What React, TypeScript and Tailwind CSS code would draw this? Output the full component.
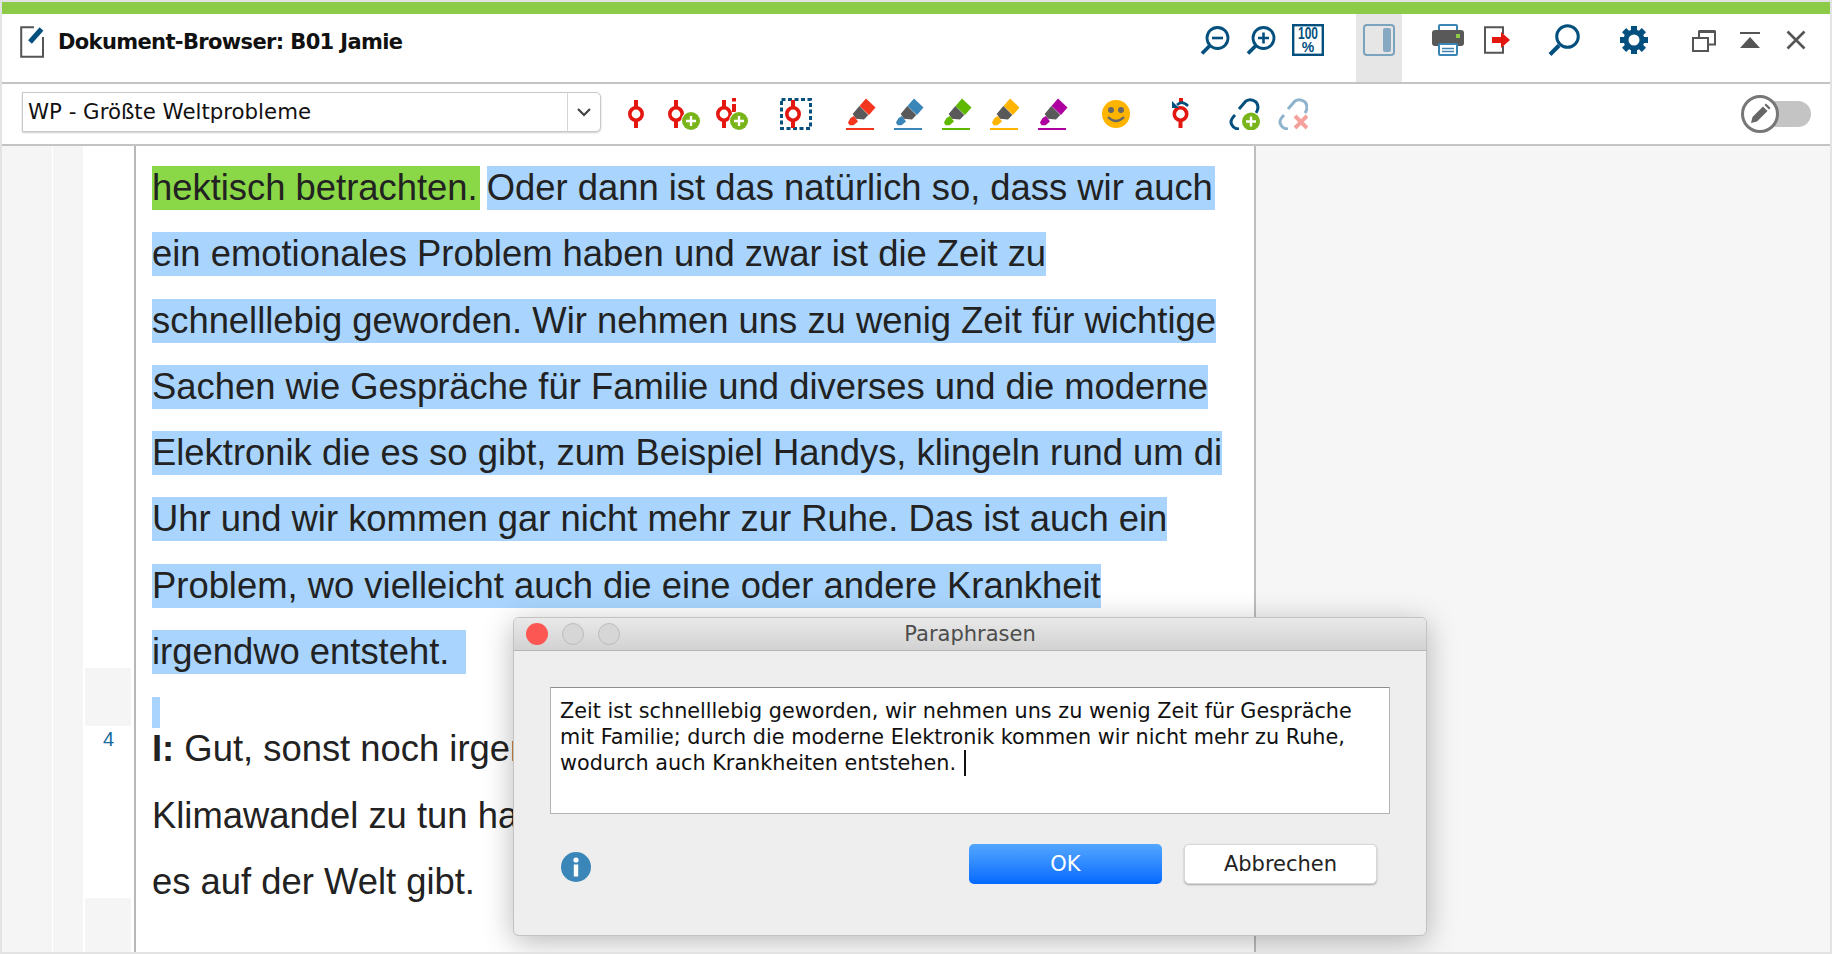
const BLUE = "#03507f";
const RED = "#e3170f";

function Marker({ cx = 12 }: { cx?: number }) {
  return (
    <>
      <rect x={cx - 2} y="2" width="4" height="28" fill={RED} />
      <circle cx={cx} cy="16" r="6.2" fill="#fff" stroke={RED} strokeWidth="3.6" />
    </>
  );
}

function PlusBadge({ cx, cy }: { cx: number; cy: number }) {
  return (
    <>
      <circle cx={cx} cy={cy} r="10" fill="#fff" stroke="none" />
      <circle cx={cx} cy={cy} r="9" fill="#78b41a" stroke="none" />
      <path d={`M${cx - 5} ${cy}H${cx + 5}M${cx} ${cy - 5}V${cy + 5}`} stroke="#fff" strokeWidth="2.4" />
    </>
  );
}

function Highlighter({ color }: { color: string }) {
  return (
    <svg viewBox="0 0 30 32" className="h-8 w-[30px] shrink-0">
      <path d="M20 .5 29.5 9.5 23 17 13.5 8Z" fill={color} />
      <path d="M13.3 8 22.3 17 18 21.5 10 20.7 6.7 16Z" fill="#595959" />
      <path d="M4.5 20 8 18 12 23.5 7.5 27.2H3.5L2 24.5Z" fill={color} />
      <rect x="0" y="30" width="28" height="2" fill={color} />
    </svg>
  );
}

function ZoomIcon({ plus }: { plus?: boolean }) {
  return (
    <svg viewBox="0 0 30 30" className="h-[30px] w-[30px] shrink-0" fill="none" stroke={BLUE}>
      <circle cx="17.5" cy="12" r="10.5" strokeWidth="2.8" />
      <path d="M9.5 20 2 27.5" strokeWidth="3.8" />
      <path d={plus ? "M12 12H23M17.5 6.5V17.5" : "M12 12H23"} strokeWidth="2.6" />
    </svg>
  );
}

function Gear() {
  return (
    <svg viewBox="0 0 28 28" className="h-7 w-7 shrink-0">
      {[0, 45, 90, 135, 180, 225, 270, 315].map((a) => (
        <rect key={a} x="11" y="0" width="6" height="6" fill={BLUE} transform={`rotate(${a} 14 14)`} />
      ))}
      <circle cx="14" cy="14" r="8" fill="#fff" stroke={BLUE} strokeWidth="5" />
    </svg>
  );
}

function TitleBar() {
  return (
    <div className="flex h-[68px] shrink-0 items-start bg-white">
      <svg viewBox="0 0 26 32" className="mt-3 ml-[18px] h-8 w-[26px] shrink-0" fill="none">
        <path d="M14 1.2H1.2V30.8H23V11" stroke="#555" strokeWidth="2" />
        <path d="M10 16 21.5 3" stroke={BLUE} strokeWidth="5" />
      </svg>
      <div className="mt-[12px] ml-[12px] text-[21px] leading-[32px] font-bold tracking-[-0.63px] text-[#111] [font-family:'DejaVu_Sans',sans-serif]">
        Dokument-Browser: B01 Jamie
      </div>

      <div className="mt-3 ml-auto flex items-center">
        <ZoomIcon />
        <div className="ml-4">
          <ZoomIcon plus />
        </div>
      </div>
      <svg viewBox="0 0 32 32" className="mt-[10px] ml-4 h-8 w-8 shrink-0">
        <rect x="1.2" y="1.2" width="29.6" height="29.6" fill="#fff" stroke={BLUE} strokeWidth="2.4" />
        <text x="16" y="15" textAnchor="middle" fontSize="16" fontWeight="700" fill={BLUE} textLength="20" lengthAdjust="spacingAndGlyphs" fontFamily="Liberation Sans, sans-serif">
          100
        </text>
        <text x="16" y="28" textAnchor="middle" fontSize="14" fontWeight="700" fill={BLUE} fontFamily="Liberation Sans, sans-serif">
          %
        </text>
      </svg>
      <div className="ml-8 flex h-[68px] w-[46px] shrink-0 items-start justify-center bg-[#e6e6e6] pt-[10px]">
        <svg viewBox="0 0 32 32" className="h-8 w-8">
          <rect x="1" y="1" width="30" height="30" rx="3" fill="none" stroke="#7ba3be" strokeWidth="2" />
          <rect x="20" y="4" width="8" height="24" rx="2" fill="#86a8c0" />
        </svg>
      </div>
      <svg viewBox="0 0 32 32" className="mt-[10px] ml-[30px] h-8 w-8 shrink-0">
        <path d="M7 6V2a1 1 0 0 1 1-1H24a1 1 0 0 1 1 1V6" fill="#fff" stroke="#3a85b5" strokeWidth="2" />
        <rect x="0" y="6" width="32" height="16" rx="3" fill="#595959" />
        <rect x="24" y="10" width="4" height="4" fill="#8bcb47" />
        <rect x="7" y="20" width="18" height="11" rx="1" fill="#fff" stroke="#3a85b5" strokeWidth="2" />
        <path d="M10 24.5H22M10 27.5H22" stroke="#3a85b5" strokeWidth="1.6" />
      </svg>
      <svg viewBox="0 0 26 28" className="mt-[12px] ml-5 h-7 w-[26px] shrink-0">
        <path d="M19 8V1.2H1V26.8H19V20" fill="none" stroke="#555" strokeWidth="2" />
        <path d="M8 11H17V6L26 14 17 22V17H8Z" fill={RED} />
      </svg>
      <svg viewBox="0 0 32 32" className="mt-[10px] ml-[38px] h-8 w-8 shrink-0" fill="none" stroke={BLUE}>
        <circle cx="19.5" cy="12.5" r="10.8" strokeWidth="3" />
        <path d="M11 21.5 2 30.5" strokeWidth="4" />
      </svg>
      <div className="mt-3 ml-10">
        <Gear />
      </div>
      <svg viewBox="0 0 24 22" className="mt-4 ml-[44px] h-[22px] w-6 shrink-0">
        <path d="M7 8V1.5H23V14.5H16" fill="none" stroke="#555" strokeWidth="2" />
        <path d="M7 1.5H23" stroke="#555" strokeWidth="3" />
        <rect x="1" y="8" width="15" height="13" fill="none" stroke="#555" strokeWidth="2" />
      </svg>
      <svg viewBox="0 0 20 16" className="mt-[18px] ml-6 h-4 w-5 shrink-0">
        <rect width="20" height="2" fill="#555" />
        <path d="M10 5 20 16H0Z" fill="#555" />
      </svg>
      <svg viewBox="0 0 20 20" className="mt-4 mr-[24px] ml-[26px] h-5 w-5 shrink-0">
        <path d="M1.5 1.5 18.5 18.5M18.5 1.5 1.5 18.5" stroke="#555" strokeWidth="2.6" />
      </svg>
    </div>
  );
}

function Toolbar() {
  return (
    <div className="flex h-[60px] shrink-0 items-center bg-white">
      <div className="mt-2 ml-5 flex h-10 w-[579px] shrink-0 self-start rounded-r-[5px] border border-[#c8c8c8] bg-white shadow-[0_1px_2px_rgba(0,0,0,0.2)]">
        <div className="flex-1 pl-[5px] text-[21.3px] leading-[38px] text-[#111] [font-family:'DejaVu_Sans',sans-serif]">
          WP - Größte Weltprobleme
        </div>
        <div className="flex w-[33px] items-center justify-center border-l border-[#d4d4d4]">
          <svg viewBox="0 0 16 10" className="h-[10px] w-4" fill="none">
            <path d="M2 2 8 8 14 2" stroke="#444" strokeWidth="2.2" />
          </svg>
        </div>
      </div>

      <svg viewBox="0 0 24 32" className="ml-[23px] h-8 w-6 shrink-0">
        <Marker />
      </svg>
      <svg viewBox="0 0 38 32" className="ml-4 h-8 w-[38px] shrink-0">
        <Marker />
        <PlusBadge cx={27} cy={23} />
      </svg>
      <svg viewBox="0 0 38 32" className="ml-[10px] h-8 w-[38px] shrink-0">
        <Marker />
        <rect x="20" y="0" width="4" height="3.5" fill={RED} />
        <rect x="20" y="6" width="4" height="8" fill={RED} />
        <PlusBadge cx={27} cy={23} />
      </svg>
      <svg viewBox="0 0 32 32" className="ml-[30px] h-8 w-8 shrink-0">
        <rect x="1.5" y="1.5" width="29" height="29" fill="none" stroke={BLUE} strokeWidth="3" strokeDasharray="4 2.5" />
        <Marker cx={13} />
      </svg>

      <div className="ml-[34px] flex gap-[18px]">
        <Highlighter color="#f5361e" />
        <Highlighter color="#3a86b8" />
        <Highlighter color="#5eb800" />
        <Highlighter color="#ffb400" />
        <Highlighter color="#ae009f" />
      </div>

      <svg viewBox="0 0 28 28" className="ml-[34px] h-7 w-7 shrink-0">
        <circle cx="14" cy="14" r="14" fill="#ffb400" />
        <circle cx="9" cy="10" r="3" fill="#666" />
        <circle cx="19" cy="10" r="3" fill="#666" />
        <path d="M6 17Q14 25 22 17" fill="none" stroke="#666" strokeWidth="2.4" />
      </svg>
      <svg viewBox="0 0 24 32" className="ml-[38px] h-8 w-6 shrink-0">
        <rect x="11" y="0" width="4" height="5" fill={RED} />
        <rect x="10.5" y="22" width="4" height="8" fill={RED} />
        <circle cx="12.5" cy="16" r="6.2" fill="#fff" stroke={RED} strokeWidth="3.6" />
        <path d="M9 7Q14 2 20 8" fill="none" stroke={BLUE} strokeWidth="2.6" />
        <path d="M4 3V10H11Z" fill={BLUE} />
      </svg>
      <svg viewBox="0 0 32 32" className="ml-[37px] h-8 w-8 shrink-0" fill="none" stroke={BLUE} strokeWidth="3">
        <path d="M10 11 17 3Q22 0 27 4 31 9 27 15" />
        <path d="M6 17Q0 23 3 27 5 31 10 31" />
        <PlusBadge cx={22} cy={23.5} />
      </svg>
      <svg viewBox="0 0 30 32" className="ml-[17px] h-8 w-[30px] shrink-0" fill="none" stroke="#8fb3cc" strokeWidth="3">
        <path d="M10 11 17 3Q22 0 27 4 31 9 27 15" />
        <path d="M6 17Q0 23 3 27 5 31 10 31" />
        <path d="M17 18 29 30M29 18 17 30" stroke="#f5a19c" strokeWidth="4" />
      </svg>

      <div className="mr-[19px] ml-auto flex items-center">
        <div className="z-10 flex h-[38px] w-[38px] items-center justify-center rounded-full border-[3px] border-[#777] bg-white">
          <svg viewBox="0 0 22 22" className="h-[22px] w-[22px]">
            <path d="M2 20 3.5 14 14 3.5 18.5 8 8 18.5Z" fill="#666" />
            <path d="M15.5 2 17 .5 21.5 5 20 6.5Z" fill="#666" />
          </svg>
        </div>
        <div className="-ml-[18px] h-[26px] w-[50px] rounded-full bg-[#c4c4c4]" />
      </div>
    </div>
  );
}

const LINE = "block h-[66.25px] whitespace-pre";
const MARK = "inline-block h-[44px] leading-[44px] bg-[#a8d4fd]";
// these three lines run under the dialog, so they stop at its left edge
const CUT = "h-[66px] w-[361px] overflow-hidden whitespace-nowrap leading-[66px]";

function Transcript() {
  return (
    <div className="relative w-[1118px] shrink-0 overflow-hidden bg-white pt-[15px] pl-4 text-[36.4px] text-[#222] [font-family:'Liberation_Sans',sans-serif]">
      <div className={LINE}>
        <span className="inline-block h-[44px] bg-[#8ad847] pr-[2px] leading-[44px]">hektisch betrachten.</span>
        <span className="inline-block w-[7px]" />
        <span className={`${MARK} pr-[2px]`}>Oder dann ist das natürlich so, dass wir auch</span>
      </div>
      <div className={LINE}>
        <span className={MARK}>ein emotionales Problem haben und zwar ist die Zeit zu</span>
      </div>
      <div className={LINE}>
        <span className={MARK}>schnelllebig geworden. Wir nehmen uns zu wenig Zeit für wichtige</span>
      </div>
      <div className={LINE}>
        <span className={MARK}>Sachen wie Gespräche für Familie und diverses und die moderne</span>
      </div>
      <div className={LINE}>
        <span className={MARK}>Elektronik die es so gibt, zum Beispiel Handys, klingeln rund um di</span>
      </div>
      <div className={LINE}>
        <span className={MARK}>Uhr und wir kommen gar nicht mehr zur Ruhe. Das ist auch ein</span>
      </div>
      <div className={LINE}>
        <span className={MARK}>Problem, wo vielleicht auch die eine oder andere Krankheit</span>
      </div>
      <div className="h-[72px] whitespace-pre">
        <span className={`${MARK} pr-[6px]`}>irgendwo entsteht. </span>
      </div>
      <div className="h-[31px] w-2 bg-[#a8d4fd]" />
      <div className={`${CUT} mt-[-12px]`}>
        <b>I:</b> Gut, sonst noch irgen
      </div>
      <div className={`${CUT} pt-px`}>Klimawandel zu tun hat</div>
      <div className={`${CUT} pt-px`}>es auf der Welt gibt.</div>
    </div>
  );
}

function Dialog() {
  return (
    <div className="absolute top-[615px] left-[511px] flex h-[319px] w-[914px] flex-col overflow-hidden rounded-[6px] border border-[#c2c2c2] bg-[#eeeeee] shadow-[0_6px_30px_rgba(0,0,0,0.28)] [font-family:'DejaVu_Sans',sans-serif]">
      <div className="relative flex h-[33px] shrink-0 items-center gap-[14px] border-b border-[#b5b5b5] bg-gradient-to-b from-[#e9e9e9] to-[#d2d2d2] pl-[12px]">
        <div className="h-[22px] w-[22px] rounded-full bg-[#fc5753]" />
        <div className="h-[22px] w-[22px] rounded-full border border-[#bcbcbc] bg-[#d6d6d6]" />
        <div className="h-[22px] w-[22px] rounded-full border border-[#bcbcbc] bg-[#d6d6d6]" />
        <div className="absolute inset-x-0 pt-[2px] text-center text-[21px] text-[#4d4d4d]">Paraphrasen</div>
      </div>
      <div className="mx-[36px] mt-[36px] h-[127px] shrink-0 border border-[#b4b4b4] border-t-[#8e8e8e] bg-white pt-[10px] pr-[8px] pl-[9px] text-[20.75px] leading-[26px] text-[#111]">
        <div className="whitespace-nowrap">Zeit ist schnelllebig geworden, wir nehmen uns zu wenig Zeit für Gespräche</div>
        <div className="whitespace-nowrap">mit Familie; durch die moderne Elektronik kommen wir nicht mehr zu Ruhe,</div>
        <div className="flex items-center">
          wodurch auch Krankheiten entstehen.
          <span className="ml-[8px] h-[26px] w-[2px] bg-[#111]" />
        </div>
      </div>
      <div className="mx-[36px] mt-[30px] flex items-center">
        <svg viewBox="0 0 30 30" className="mt-[6px] ml-[11px] h-[30px] w-[30px] shrink-0">
          <circle cx="15" cy="15" r="15" fill="#3a86b8" />
          <circle cx="15" cy="8" r="2.6" fill="#fff" />
          <rect x="12.8" y="12.5" width="4.4" height="12" fill="#fff" />
        </svg>
        <div className="ml-auto flex h-10 w-[193px] items-center justify-center rounded-[5px] bg-gradient-to-b from-[#52a6ff] to-[#0068ff] pt-[2px] text-[21px] text-white">
          OK
        </div>
        <div className="mr-[13px] ml-[22px] flex h-10 w-[193px] items-center justify-center rounded-[5px] border border-[#d8d8d8] bg-white pt-[2px] text-[21px] text-[#222] shadow-[0_1px_2px_rgba(0,0,0,0.3)]">
          Abbrechen
        </div>
      </div>
    </div>
  );
}

export default function App() {
  return (
    <div className="relative flex h-[954px] w-[1832px] flex-col overflow-hidden border-2 border-[#e3e3e3] bg-white">
      <div className="h-3 shrink-0 bg-[#8bcb47]" />
      <TitleBar />
      <div className="h-[2px] shrink-0 bg-[#c4c4c4]" />
      <Toolbar />
      <div className="h-[2px] shrink-0 bg-[#c4c4c4]" />

      <div className="flex min-h-0 flex-1">
        <div className="w-[50px] shrink-0 bg-[#f5f5f5]" />
        <div className="w-[1px] shrink-0 bg-white" />
        <div className="w-[30px] shrink-0 bg-[#f5f5f5]" />
        <div className="w-[2px] shrink-0 bg-white" />
        <div className="flex w-[46px] shrink-0 flex-col">
          <div className="h-[522px] bg-white" />
          <div className="h-[58px] bg-[#f5f5f5]" />
          <div className="h-[172px] bg-white pr-[17px] text-right text-[20px] leading-[26px] text-[#1a6aa0] [font-family:'Liberation_Sans',sans-serif]">
            4
          </div>
          <div className="flex-1 bg-[#f5f5f5]" />
        </div>
        <div className="w-[3px] shrink-0 bg-white" />
        <div className="w-[2px] shrink-0 bg-[#b8b8b8]" />
        <Transcript />
        <div className="w-[2px] shrink-0 bg-[#bdbdbd]" />
        <div className="flex-1 bg-[#f6f6f6]" />
      </div>

      <Dialog />
    </div>
  );
}
